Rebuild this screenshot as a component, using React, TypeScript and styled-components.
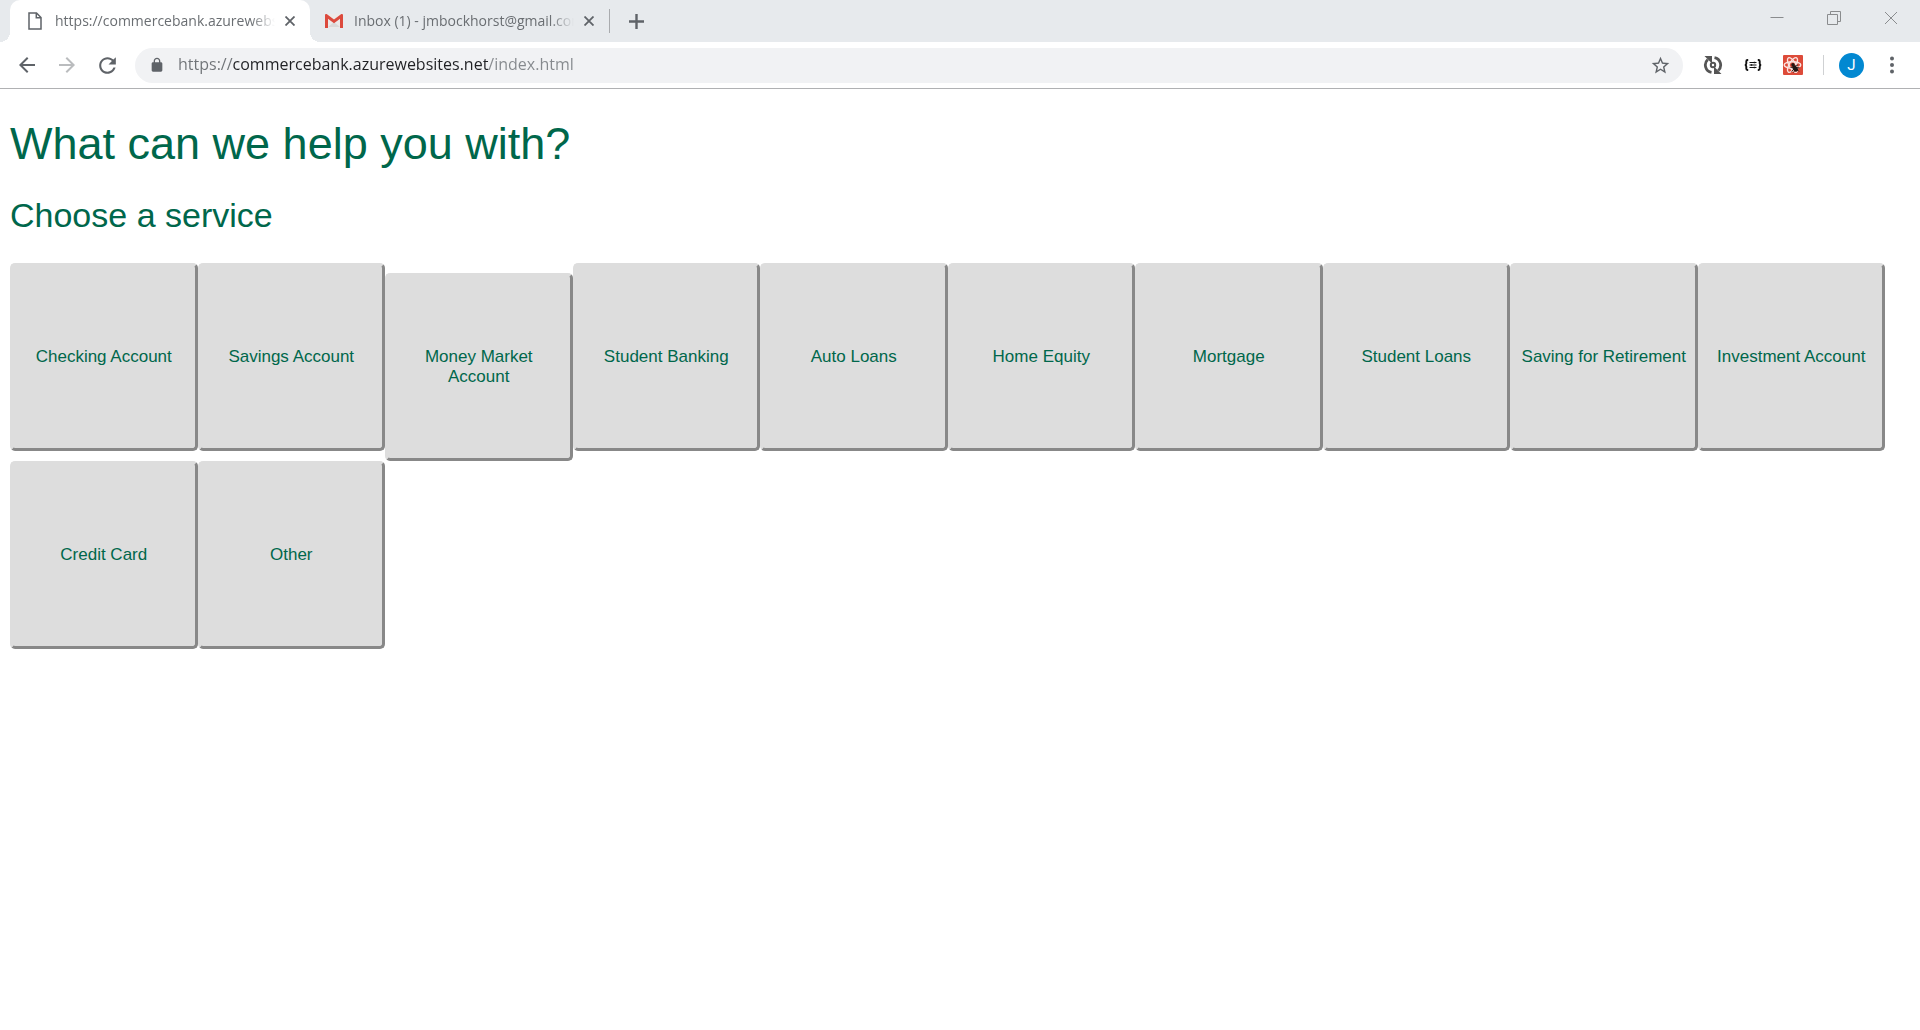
import React from 'react';
import styled, { createGlobalStyle } from 'styled-components';

const GlobalStyle = createGlobalStyle`
  * { box-sizing: border-box; }
  body {
    margin: 0;
    background: #fff;
    font-family: "Liberation Sans", Arial, sans-serif;
  }
  button { font: inherit; cursor: pointer; }
`;

const uiFont = '"Open Sans", "Noto Sans", sans-serif';

const Browser = styled.div`
  min-height: 100vh;
  display: flex;
  flex-direction: column;
`;

const TabStrip = styled.div`
  display: flex;
  align-items: stretch;
  height: 42px;
  padding-left: 10px;
  background: #e7eaed;
  font-family: ${uiFont};
`;

const Tab = styled.div<{ $active?: boolean }>`
  position: relative;
  display: flex;
  align-items: center;
  width: 300px;
  padding: 0 10px 0 15px;
  border-radius: 10px 10px 0 0;
  background: ${(p) => (p.$active ? '#fff' : 'transparent')};

  & + & {
    margin-left: -1px;
  }
  &::before,
  &::after {
    content: ${(p) => (p.$active ? '""' : 'none')};
    position: absolute;
    bottom: 0;
    width: 10px;
    height: 10px;
  }
  &::before {
    left: -10px;
    background: radial-gradient(circle at 0 0, transparent 10px, #fff 10px);
  }
  &::after {
    right: -10px;
    background: radial-gradient(circle at 100% 0, transparent 10px, #fff 10px);
  }
`;

const TabIcon = styled.span`
  display: flex;
  justify-content: center;
  width: 20px;
  margin-right: 10px;
`;

const TabTitle = styled.span`
  flex: 1;
  overflow: hidden;
  white-space: nowrap;
  font-size: 14px;
  line-height: 20px;
  color: #6a6e72;
  mask-image: linear-gradient(to right, #000 calc(100% - 24px), transparent);
`;

const IconButton = styled.button<{ $width: number }>`
  display: flex;
  flex: none;
  align-items: center;
  justify-content: center;
  width: ${(p) => p.$width}px;
  padding: 0;
  border: 0;
  background: none;
  color: #5f6368;
`;

const TabClose = styled(IconButton)`
  margin-left: 5px;
`;

const Divider = styled.span`
  flex: none;
  align-self: center;
  width: 1px;
  height: 24px;
  background: #a9abae;
`;

const WindowControls = styled.div`
  display: flex;
  align-items: stretch;
  height: 36px;
  margin-left: auto;
  padding-right: 1px;
`;

const Toolbar = styled.div`
  display: flex;
  align-items: center;
  height: 47px;
  padding: 0 8px 0 7px;
  border-bottom: 1px solid #b0b1b3;
  background: #fff;
  font-family: ${uiFont};
`;

const AddressBar = styled.div`
  display: flex;
  flex: 1;
  align-items: center;
  height: 35px;
  margin: 0 10px 0 8px;
  padding: 0 3px 0 12px;
  border-radius: 18px;
  background: #f1f2f4;
`;

const Address = styled.input`
  flex: 1;
  min-width: 0;
  height: 28px;
  margin-left: 11px;
  padding: 0 0 2px;
  border: 0;
  outline: 0;
  font-family: inherit;
  font-size: 16px;
  color: transparent;
  caret-color: #202124;
  background: linear-gradient(to right, #6f7377 55px, #202124 55px 311px, #85898d 311px);
  background-clip: text;
`;

const ToolDivider = styled(Divider)`
  height: 20px;
  margin: 0 15px 0 10px;
  background: #cfd1d3;
`;

const Avatar = styled.button`
  flex: none;
  width: 25px;
  height: 25px;
  margin-right: 8px;
  padding: 0;
  border: 0;
  border-radius: 50%;
  background: #0288d1;
  color: #fff;
  font-family: Roboto, sans-serif;
  font-size: 15px;
  line-height: 25px;
`;

const Page = styled.main`
  flex: 1;
  padding: 27px 35px 20px 10px;
  color: #00674b;
`;

const Title = styled.h1`
  margin: 0 0 20px;
  font-size: 45px;
  line-height: 56px;
  font-weight: 400;
`;

const Subtitle = styled.h2`
  margin: 0 0 24px;
  font-size: 34px;
  line-height: 47px;
  font-weight: 400;
`;

const Services = styled.div`
  display: grid;
  grid-template-columns: repeat(auto-fill, minmax(187px, 1fr));
  align-items: baseline;
`;

const ServiceButton = styled.button`
  height: 188px;
  padding: 0 6px;
  border: 3px solid;
  border-color: #ddd #888 #888 #ddd;
  border-radius: 5px;
  background: #ddd;
  color: #00674b;
  font-size: 17px;
  line-height: 20px;
  text-align: center;
`;

const services = [
  'Checking Account',
  'Savings Account',
  'Money Market Account',
  'Student Banking',
  'Auto Loans',
  'Home Equity',
  'Mortgage',
  'Student Loans',
  'Saving for Retirement',
  'Investment Account',
  'Credit Card',
  'Other',
];

const Glyph = ({ d, size, fill = 'currentColor' }: { d: string; size: number; fill?: string }) => (
  <svg width={size} height={size} viewBox="0 0 24 24" fill={fill} aria-hidden="true">
    <path d={d} />
  </svg>
);

const paths = {
  back: 'M20 11H7.83l5.59-5.59L12 4l-8 8 8 8 1.41-1.41L7.83 13H20v-2z',
  forward: 'M12 4l-1.41 1.41L16.17 11H4v2h12.17l-5.58 5.59L12 20l8-8z',
  reload:
    'M17.65 6.35C16.2 4.9 14.21 4 12 4c-4.42 0-7.99 3.58-7.99 8s3.57 8 7.99 8c3.73 0 6.84-2.55 7.73-6h-2.08c-.82 2.33-3.04 4-5.65 4-3.31 0-6-2.69-6-6s2.69-6 6-6c1.66 0 3.14.69 4.22 1.78L13 11h7V4l-2.35 2.35z',
  lock: 'M18 8h-1V6c0-2.76-2.24-5-5-5S7 3.24 7 6v2H6c-1.1 0-2 .9-2 2v10c0 1.1.9 2 2 2h12c1.1 0 2-.9 2-2V10c0-1.1-.9-2-2-2zM9 8V6c0-1.66 1.34-3 3-3s3 1.34 3 3v2z',
  star: 'M22 9.24l-7.19-.62L12 2 9.19 8.63 2 9.24l5.46 4.73L5.82 21 12 17.27 18.18 21l-1.63-7.03L22 9.24zM12 15.4l-3.76 2.27 1-4.28-3.32-2.88 4.38-.38L12 6.1l1.71 4.04 4.38.38-3.32 2.88 1 4.28L12 15.4z',
};

const PageIcon = () => (
  <svg width="14" height="18" viewBox="0 0 14 18" fill="none" stroke="#5f6368" strokeWidth="1.5" aria-hidden="true">
    <path d="M1 1h7.5L13 5.500V17H1z" />
    <path d="M8.300 1v4.800H13" />
  </svg>
);

const GmailIcon = () => (
  <svg width="18" height="14" viewBox="0 0 18 14" aria-hidden="true">
    <path d="M1 0h16v14H1z" fill="#eceae9" />
    <path d="M3 13l6-5 6 5z" fill="#d9d9d9" />
    <path d="M0 14V1.300C0 0 1.200-.300 2 .300L9 5.500 16 .300c.800-.600 2-.300 2 1V14h-3V4.800L9 9.200 3 4.800V14z" fill="#dc4a3d" />
  </svg>
);

const CloseIcon = () => (
  <svg width="10" height="10" viewBox="0 0 10 10" fill="none" stroke="currentColor" strokeWidth="1.800" aria-hidden="true">
    <path d="M.5.5l9 9M9.500.5l-9 9" />
  </svg>
);

const SyncIcon = () => (
  <svg width="20" height="20" viewBox="0 0 20 20" fill="none" stroke="#555" strokeWidth="2.800" aria-hidden="true">
    <path d="M4.800 4.500A7.500 7.500 0 0 0 8.500 17.400M11.500 2.600a7.500 7.500 0 0 1 3.700 12.900" />
    <path d="M1.500 1h7.500v7.500zM18.500 19h-7.500v-7.500z" fill="#555" stroke="none" />
    <circle cx="10" cy="10" r="2.200" strokeWidth="2" />
  </svg>
);

const BracesIcon = () => (
  <svg width="18" height="12" viewBox="0 0 18 12" fill="none" stroke="#111" aria-hidden="true">
    <path d="M4.200 1H3.500Q2.300 1 2.300 2.200v2.300Q2.300 6 .8 6q1.500 0 1.500 1.500v2.300Q2.300 11 3.500 11h.7M13.800 1h.7q1.200 0 1.200 1.200v2.300Q15.700 6 17.200 6q-1.500 0-1.500 1.500v2.300q0 1.200-1.200 1.200h-.7" strokeWidth="1.900" />
    <path d="M5.500 3.500h7M5.500 6h7M5.500 8.500h7" strokeWidth="1.200" />
    <path d="M10.500 2.700v1.600M7.500 5.200v1.600M10.500 7.700v1.600" strokeWidth="1.400" />
  </svg>
);

const ReactBugIcon = () => (
  <svg width="20" height="20" viewBox="0 0 20 20" fill="none" aria-hidden="true">
    <rect width="20" height="20" rx="1" fill="#dd4b39" />
    <g stroke="#fbe4e1" strokeWidth="1.400">
      <ellipse cx="9.500" cy="10" rx="8.300" ry="3.300" />
      <ellipse cx="9.500" cy="10" rx="8.300" ry="3.300" transform="rotate(60 9.500 10)" />
      <ellipse cx="9.500" cy="10" rx="8.300" ry="3.300" transform="rotate(120 9.500 10)" />
    </g>
    <ellipse cx="12.200" cy="13.500" rx="2.300" ry="3.500" fill="#221513" transform="rotate(-35 12.200 13.500)" />
    <circle cx="10" cy="9.800" r="1.700" fill="#221513" />
    <path d="M7.500 12.500l3-.5M8.500 16.500l2.500-2.500M12.500 10.500l2.500-.5M13.500 12.500l3 .3M10.500 17.500l1.500-2.500M14 14.500l2 2" stroke="#221513" strokeWidth="0.900" />
  </svg>
);

const MenuIcon = () => (
  <svg width="6" height="18" viewBox="0 0 6 18" fill="currentColor" aria-hidden="true">
    <circle cx="3" cy="2.500" r="2" />
    <circle cx="3" cy="9" r="2" />
    <circle cx="3" cy="15.500" r="2" />
  </svg>
);

const WindowIcon = ({ d }: { d: string }) => (
  <svg width="14" height="14" viewBox="0 0 14 14" fill="none" stroke="#8a8c8e" aria-hidden="true">
    <path d={d} />
  </svg>
);

const windowControls = [
  { label: 'Minimize', d: 'M.5 6.500h13' },
  { label: 'Restore', d: 'M.5 3.500h10v10H.5zM3.500 3.500v-3h10v10h-3' },
  { label: 'Close window', d: 'M1 1l12 12M13 1L1 13' },
];

const tabs = [
  { title: 'https://commercebank.azurewebsites.net', icon: <PageIcon />, active: true },
  { title: 'Inbox (1) - jmbockhorst@gmail.com', icon: <GmailIcon />, active: false },
];

export default function App() {
  return (
    <Browser>
      <GlobalStyle />
      <TabStrip>
        {tabs.map((tab) => (
          <Tab key={tab.title} $active={tab.active}>
            <TabIcon>{tab.icon}</TabIcon>
            <TabTitle>{tab.title}</TabTitle>
            <TabClose $width={20} aria-label="Close tab">
              <CloseIcon />
            </TabClose>
          </Tab>
        ))}
        <Divider />
        <IconButton $width={52} aria-label="New tab">
          <svg width="15" height="15" viewBox="0 0 15 15" stroke="currentColor" strokeWidth="2.400" aria-hidden="true">
            <path d="M7.500 0v15M0 7.500h15" />
          </svg>
        </IconButton>
        <WindowControls>
          {windowControls.map((control) => (
            <IconButton key={control.label} $width={57} aria-label={control.label}>
              <WindowIcon d={control.d} />
            </IconButton>
          ))}
        </WindowControls>
      </TabStrip>

      <Toolbar>
        <IconButton $width={40} aria-label="Back">
          <Glyph d={paths.back} size={24} />
        </IconButton>
        <IconButton $width={40} aria-label="Forward">
          <Glyph d={paths.forward} size={24} fill="#babcbe" />
        </IconButton>
        <IconButton $width={40} aria-label="Reload">
          <Glyph d={paths.reload} size={25} />
        </IconButton>
        <AddressBar>
          <IconButton $width={20} aria-label="Site information">
            <Glyph d={paths.lock} size={16} />
          </IconButton>
          <Address
            type="text"
            aria-label="Address"
            spellCheck={false}
            defaultValue="https://commercebank.azurewebsites.net/index.html"
          />
          <IconButton $width={40} aria-label="Bookmark this page">
            <Glyph d={paths.star} size={21} />
          </IconButton>
        </AddressBar>
        <IconButton $width={40} aria-label="Refresh extension">
          <SyncIcon />
        </IconButton>
        <IconButton $width={40} aria-label="JSON extension">
          <BracesIcon />
        </IconButton>
        <IconButton $width={40} aria-label="React extension">
          <ReactBugIcon />
        </IconButton>
        <ToolDivider />
        <Avatar>J</Avatar>
        <IconButton $width={40} aria-label="Menu">
          <MenuIcon />
        </IconButton>
      </Toolbar>

      <Page>
        <Title>What can we help you with?</Title>
        <Subtitle>Choose a service</Subtitle>
        <Services>
          {services.map((service) => (
            <ServiceButton key={service}>{service}</ServiceButton>
          ))}
        </Services>
      </Page>
    </Browser>
  );
}
